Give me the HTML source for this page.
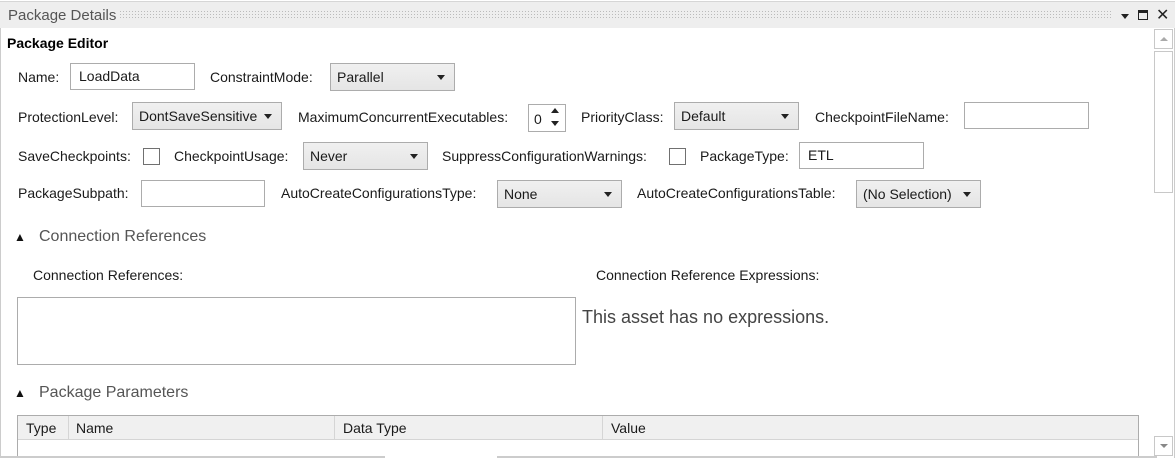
<!DOCTYPE html>
<html style="overflow:hidden;width:1175px;height:458px"><head><meta charset="utf-8"><style>
*{box-sizing:border-box;margin:0;padding:0}
body{width:1175px;height:458px;overflow:hidden;background:#fff;font-family:"Liberation Sans",sans-serif;font-size:14px;color:#1a1a1a;position:relative}
.a{position:absolute;white-space:nowrap}
.l{position:absolute;white-space:nowrap;line-height:16px}
.in{position:absolute;border:1px solid #acacac;background:#fff;padding-left:8px;line-height:25px}
.cb{position:absolute;border:1px solid #acacac;background:linear-gradient(#f0f0f0,#e5e5e5);padding-left:6px;line-height:26px}
.cb:after{content:"";position:absolute;right:9px;top:11px;border-left:4px solid transparent;border-right:4px solid transparent;border-top:5px solid #222}
.chk{position:absolute;width:17px;height:17px;border:1px solid #707070;background:#fff}
.sec{position:absolute;font-size:16px;color:#555;white-space:nowrap}
</style></head><body>
<div class="a" style="left:0;top:1px;width:1175px;height:27px;background:#eeeeee;border-top:1px solid #d6d6d6"></div>
<div class="a" style="left:8px;top:7px;font-size:15px;color:#555">Package Details</div>
<div class="a" style="left:119px;top:10px;width:993px;height:8px;background-image:radial-gradient(#bbb 0.6px,transparent 0.7px);background-size:3px 3px"></div>
<div class="a" style="left:1121px;top:14px;border-left:4px solid transparent;border-right:4px solid transparent;border-top:5px solid #222"></div>
<div class="a" style="left:1138px;top:10px;width:10px;height:10px;border:1px solid #222;border-top:3px solid #222"></div>
<div class="a" style="left:1156px;top:5px;font-size:16px;color:#222">✕</div>

<div class="a" style="left:7px;top:35px;font-weight:bold;font-size:14px;color:#000">Package Editor</div>

<div class="l" style="left:18px;top:69px">Name:</div>
<div class="in" style="left:70px;top:63px;width:125px;height:27px">LoadData</div>
<div class="l" style="left:210px;top:69px">ConstraintMode:</div>
<div class="cb" style="left:330px;top:63px;width:125px;height:28px">Parallel</div>

<div class="l" style="left:18px;top:109px">ProtectionLevel:</div>
<div class="cb" style="left:132px;top:102px;width:150px;height:28px">DontSaveSensitive</div>
<div class="l" style="left:298px;top:109px">MaximumConcurrentExecutables:</div>
<div class="in" style="left:528px;top:104px;width:38px;height:28px;padding-left:5px;line-height:28px">0</div>
<div class="a" style="left:551px;top:108px;border-left:4px solid transparent;border-right:4px solid transparent;border-bottom:5px solid #222"></div>
<div class="a" style="left:551px;top:121px;border-left:4px solid transparent;border-right:4px solid transparent;border-top:5px solid #222"></div>
<div class="l" style="left:581px;top:109px">PriorityClass:</div>
<div class="cb" style="left:674px;top:102px;width:125px;height:28px">Default</div>
<div class="l" style="left:815px;top:109px">CheckpointFileName:</div>
<div class="in" style="left:964px;top:102px;width:125px;height:27px"></div>

<div class="l" style="left:18px;top:148px">SaveCheckpoints:</div>
<div class="chk" style="left:143px;top:148px"></div>
<div class="l" style="left:174px;top:148px">CheckpointUsage:</div>
<div class="cb" style="left:303px;top:142px;width:125px;height:28px">Never</div>
<div class="l" style="left:442px;top:148px">SuppressConfigurationWarnings:</div>
<div class="chk" style="left:669px;top:148px"></div>
<div class="l" style="left:700px;top:148px">PackageType:</div>
<div class="in" style="left:799px;top:142px;width:125px;height:27px">ETL</div>

<div class="l" style="left:18px;top:185px">PackageSubpath:</div>
<div class="in" style="left:141px;top:180px;width:124px;height:27px"></div>
<div class="l" style="left:281px;top:185px">AutoCreateConfigurationsType:</div>
<div class="cb" style="left:497px;top:180px;width:125px;height:28px">None</div>
<div class="l" style="left:637px;top:185px">AutoCreateConfigurationsTable:</div>
<div class="cb" style="left:856px;top:180px;width:125px;height:28px">(No Selection)</div>

<div class="a" style="left:14px;top:230px;font-size:12px;color:#111">▲</div>
<div class="sec" style="left:39px;top:228px">Connection References</div>
<div class="l" style="left:33px;top:267px">Connection References:</div>
<div class="l" style="left:596px;top:267px">Connection Reference Expressions:</div>
<div class="a" style="left:17px;top:297px;width:559px;height:68px;border:1px solid #acacac"></div>
<div class="a" style="left:582px;top:307px;font-size:18px;color:#444">This asset has no expressions.</div>

<div class="a" style="left:14px;top:386px;font-size:12px;color:#111">▲</div>
<div class="sec" style="left:39px;top:384px">Package Parameters</div>
<div class="a" style="left:17px;top:415px;width:1122px;height:41px;border:1px solid #acacac;border-bottom:none"></div>
<div class="a" style="left:18px;top:416px;width:1120px;height:24px;background:#f0f0f0;border-bottom:1px solid #d5d5d5"></div>
<div class="a" style="left:68px;top:416px;width:1px;height:24px;background:#d5d5d5"></div>
<div class="a" style="left:334px;top:416px;width:1px;height:24px;background:#d5d5d5"></div>
<div class="a" style="left:602px;top:416px;width:1px;height:24px;background:#d5d5d5"></div>
<div class="l" style="left:26px;top:420px">Type</div>
<div class="l" style="left:76px;top:420px">Name</div>
<div class="l" style="left:343px;top:420px">Data Type</div>
<div class="l" style="left:611px;top:420px">Value</div>
<div class="a" style="left:0;top:456px;width:385px;height:2px;background:#ccc"></div>
<div class="a" style="left:497px;top:456px;width:660px;height:2px;background:#ccc"></div>
<div class="a" style="left:0;top:28px;width:1px;height:430px;background:#ccc"></div>
<div class="a" style="left:1174px;top:28px;width:1px;height:430px;background:#ccc"></div>

<div class="a" style="left:1153px;top:28px;width:20px;height:428px;background:#fff"></div>
<div class="a" style="left:1154px;top:29px;width:19px;height:20px;border:1px solid #c8c8c8"></div>
<div class="a" style="left:1160px;top:37px;border-left:4px solid transparent;border-right:4px solid transparent;border-bottom:4px solid #aaa"></div>
<div class="a" style="left:1154px;top:51px;width:19px;height:142px;border:1px solid #c8c8c8"></div>
<div class="a" style="left:1154px;top:436px;width:19px;height:20px;border:1px solid #c8c8c8"></div>
<div class="a" style="left:1160px;top:444px;border-left:4px solid transparent;border-right:4px solid transparent;border-top:4px solid #888"></div>
</body></html>
